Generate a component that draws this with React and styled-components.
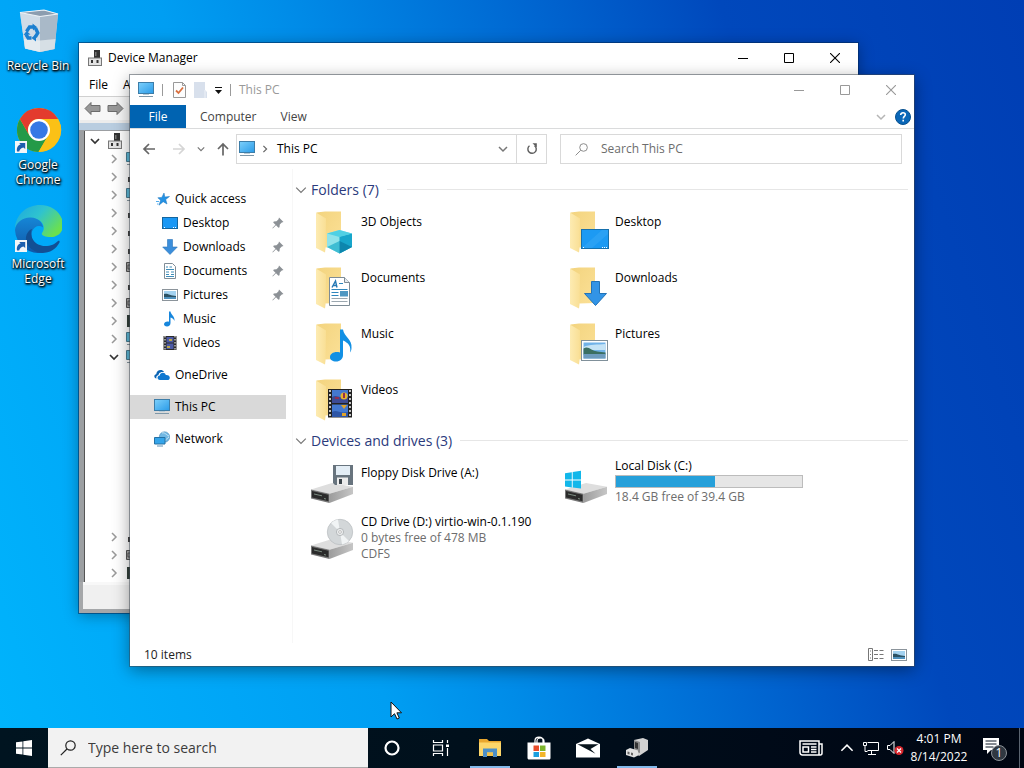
import React from "react";
import styled, { createGlobalStyle, css } from "styled-components";

const GlobalStyle = createGlobalStyle`
  * { box-sizing: border-box; }
  body {
    margin: 0;
    font-family: "Open Sans", "Noto Sans", sans-serif;
    font-size: 12px;
    line-height: 16px;
    color: #000;
  }
  button, input { font: inherit; color: inherit; }
  button { border: 0; padding: 0; background: none; }
  svg { display: block; flex: none; }
  ul { list-style: none; margin: 0; padding: 0; }
`;

/* ---------- desktop ---------- */

const Desktop = styled.main`
  min-height: 100vh;
  display: flex;
  flex-direction: column;
  background: linear-gradient(72deg, #00b4fc 0%, #00a6f7 20%, #009ef2 32%, #008ce8 42%, #0068d2 60%, #0048bc 76%, #003eb4 100%);
`;

const Workspace = styled.div`
  position: relative;
  flex: 1;
  min-height: 720px;
  padding: 7px 0 0;
`;

const Shortcuts = styled.nav`
  display: flex;
  flex-direction: column;
  gap: 18px;
  width: 76px;
`;

const Shortcut = styled.a`
  display: flex;
  flex-direction: column;
  align-items: center;
  gap: 3px;
  min-height: 81px;
  color: #fff;
  line-height: 15px;
  text-align: center;
  text-decoration: none;
  text-shadow: 0 1px 2px #000, 1px 1px 2px #000, 1px 1px 3px rgba(0, 0, 0, 0.8);
`;

const ShortcutLabel = styled.span`
  padding: 0 4px;
`;

const Pointer = styled.svg`
  position: absolute;
  left: 390px;
  bottom: 8px;
`;

/* ---------- window parts ---------- */

const Window = styled.section`
  position: absolute;
  display: flex;
  flex-direction: column;
  background: #fff;
`;

const DeviceWindow = styled(Window)`
  inset: 43px 166px 115px 79px;
  background: #a5a7a9;
  box-shadow: 0 0 0 1px rgba(0, 40, 90, 0.55), 0 2px 14px rgba(0, 0, 0, 0.35);
`;

const ExplorerWindow = styled(Window)`
  inset: 75px 110px 62px 130px;
  box-shadow: 0 0 0 1px rgba(60, 70, 80, 0.5), 0 4px 16px rgba(0, 0, 0, 0.4);
`;

const TitleBar = styled.header`
  display: flex;
  align-items: center;
  height: 30px;
  background: #fff;
  color: ${(p) => (p.$dim ? "#999" : "#000")};
`;

const DeviceTitle = styled.h1`
  flex: 1;
  margin: 0 0 0 6px;
  font-size: 12px;
  font-weight: 400;
`;

const ExplorerTitle = styled(DeviceTitle)`
  margin-left: 8px;
`;

const WindowButtons = styled.div`
  display: flex;
`;

const WindowButton = styled.button`
  display: grid;
  place-items: center;
  width: 46px;
  height: 28px;
`;

const Divider = styled.span`
  width: 1px;
  height: 12px;
  background: #9a9a9a;
`;

/* ---------- device manager ---------- */

const MenuBar = styled.nav`
  display: flex;
  gap: 15px;
  height: 23px;
  padding: 3px 10px;
  background: #fff;
`;

const DeviceToolbar = styled.div`
  display: flex;
  gap: 6px;
  height: 27px;
  padding: 4px 5px;
  background: #f7f7f7;
  border-top: 1px solid #d0d0d0;
  border-bottom: 3px solid #ececec;
`;

const TreeFrame = styled.div`
  flex: 1;
  display: flex;
  flex-direction: column;
  margin: 0 3px 0 0;
  padding: 8px 3px 0 5px;
  background: linear-gradient(#b9cde0, #b9cde0) top / 100% 7px no-repeat, #9c9fa2;
`;

const Tree = styled.ul`
  flex: 1;
  background: #fff;
  border-left: 1px solid #555;
  && { padding: 1px 0 0 5px; }
`;

const TreeRow = styled.li`
  display: flex;
  align-items: center;
  gap: ${(p) => (p.$level ? 7 : 8)}px;
  height: 18px;
  padding-left: ${(p) => p.$level * 19}px;
`;

const TreeChildren = styled.li`
  height: 162px;
`;

const DeviceStatus = styled.footer`
  height: 27px;
  margin: 0 4px 4px 4px;
  background: #f0f0f0;
  border-top: 3px solid #f8f8f8;
`;

/* ---------- explorer ---------- */

const QuickTools = styled.div`
  display: flex;
  align-items: center;
  gap: 8px;
  padding-left: 8px;
`;

const QuickActions = styled.div`
  display: flex;
  align-items: center;
  gap: 8px;
  padding-left: 2px;
`;

const Ribbon = styled.nav`
  display: flex;
  align-items: center;
  height: 24px;
  border-bottom: 1px solid #dadbdc;
`;

const RibbonTab = styled.button`
  height: 24px;
  padding: 0 10px 0 14px;
  color: #444;
  ${(p) =>
    p.$active &&
    css`
      width: 56px;
      height: 23px;
      padding: 0;
      color: #fff;
      background: #0063b1;
    `}
`;

const RibbonEnd = styled.div`
  display: flex;
  align-items: center;
  gap: 9px;
  margin-left: auto;
  padding-right: 3px;
`;

const AddressRow = styled.div`
  display: flex;
  align-items: center;
  height: 40px;
  padding: 0 12px;
`;

const HistoryButtons = styled.div`
  display: flex;
  align-items: center;
  gap: 11px;
  width: 94px;
`;

const BackButton = styled.button`
  padding-right: 5px;
`;

const AddressBox = styled.div`
  flex: 269;
  display: flex;
  align-items: center;
  gap: 6px;
  height: 30px;
  padding: 0 8px 0 2px;
  border: 1px solid #d9d9d9;
`;

const AddressText = styled.button`
  flex: 1;
  padding-left: 2px;
  text-align: left;
`;

const RefreshButton = styled.button`
  display: grid;
  place-items: center;
  width: 30px;
  height: 30px;
  border: 1px solid #d9d9d9;
  border-left: 0;
`;

const SearchBox = styled.label`
  flex: 312;
  display: flex;
  align-items: center;
  gap: 13px;
  height: 30px;
  margin-left: 13px;
  padding: 0 14px;
  border: 1px solid #d9d9d9;
`;

const SearchInput = styled.input`
  flex: 1;
  min-width: 0;
  padding: 0;
  border: 0;
  outline: 0;
  background: none;
  &::placeholder { color: #6d6d6d; opacity: 1; }
`;

const Body = styled.div`
  flex: 1;
  display: flex;
`;

const NavPane = styled.nav`
  flex: none;
  width: 163px;
  padding-top: 18px;
  border-right: 1px solid #f7f7f7;
`;

const NavGroup = styled.ul`
  && { margin-bottom: 8px; }
`;

const NavLink = styled.a`
  display: flex;
  align-items: center;
  gap: 5px;
  width: 156px;
  height: 24px;
  padding: 0 2px 0 ${(p) => (p.$nested ? 32 : 24)}px;
  color: #000;
  text-decoration: none;
  background: ${(p) => (p.$selected ? "#d9d9d9" : "none")};
`;

const NavLabel = styled.span`
  flex: 1;
`;

const Content = styled.div`
  flex: 1;
  padding: 10px 6px 0 2px;
`;

const GroupTitle = styled.h2`
  display: flex;
  align-items: center;
  gap: 4px;
  height: 21px;
  margin: 0 0 6px;
  font-size: 14px;
  font-weight: 400;
  line-height: 20px;
  color: #2b3a7c;
  &::after {
    content: "";
    flex: 1;
    height: 1px;
    margin-left: 4px;
    background: #e6e6e6;
  }
`;

const ItemGrid = styled.ul`
  display: grid;
  grid-template-columns: repeat(auto-fill, 254px);
  grid-auto-rows: 56px;
  && { padding-left: 12px; }
`;

const Item = styled.li`
  display: flex;
  gap: 6px;
  padding-top: 2px;
`;

const ItemText = styled.div`
  display: flex;
  flex-direction: column;
  margin-top: ${(p) => (p.$tall ? -1 : 6)}px;
  white-space: nowrap;
`;

const Detail = styled.span`
  color: #6d6d6d;
`;

const Meter = styled.div`
  width: 188px;
  height: 13px;
  margin: 1px 0;
  background: #e6e6e6;
  border: 1px solid #bcbcbc;
`;

const MeterFill = styled.div`
  height: 100%;
  background: #26a0da;
`;

const StatusBar = styled.footer`
  display: flex;
  align-items: center;
  justify-content: space-between;
  height: 23px;
  padding: 0 7px 0 14px;
  color: #222;
`;

const ViewButtons = styled.div`
  display: flex;
  gap: 6px;
`;

/* ---------- taskbar ---------- */

const Taskbar = styled.footer`
  display: flex;
  height: 40px;
  color: #fff;
  background: linear-gradient(90deg, #001420, #00101c 45%, #000a18 75%, #000612);
`;

const TaskButton = styled.button`
  display: grid;
  place-items: center;
  width: 48px;
  height: 40px;
  ${(p) =>
    p.$running &&
    css`
      background: linear-gradient(#83b9ea, #83b9ea) bottom / 40px 2px no-repeat;
    `}
`;

const TaskSearch = styled.label`
  display: flex;
  align-items: center;
  gap: 12px;
  width: 320px;
  padding-left: 12px;
  background: #f2f2f2;
  border-bottom: 1px solid #aaa;
  font-size: 14px;
  line-height: 20px;
  ${SearchInput}::placeholder { color: #3c3c3c; }
`;

const TaskApps = styled.div`
  display: flex;
  gap: 1px;
`;

const Tray = styled.div`
  display: flex;
  align-items: center;
  margin-left: auto;
`;

const TrayButton = styled.button`
  display: grid;
  place-items: center;
  width: ${(p) => p.$w || 24}px;
  height: 40px;
`;

const Clock = styled.time`
  width: 64px;
  line-height: 18px;
  text-align: center;
`;

const ShowDesktop = styled.button`
  width: 5px;
  height: 40px;
  border-left: 1px solid #5b6470;
`;

/* ---------- icons ---------- */

const ShortcutArrow = () => (
  <g>
    <rect x="1" y="35" width="12" height="12" fill="#f4f6f8" />
    <path d="M3 45.500c-.6-4 1-6.500 3.600-7L5.200 37h6v6l-1.700-1.600C7 42 5.500 43.500 5.200 45.500z" fill="#1e5fae" />
  </g>
);

const RecycleIcon = () => (
  <svg width="48" height="48" viewBox="0 0 48 48">
    <path d="M6 5.500 30 3l14 4-3.500 35L26 45 11 41.500z" fill="#c3d0dc" />
    <path d="M6 5.500 26 9.500 26 45 11 41.500z" fill="#d0dce7" />
    <path d="M26 9.500 44 7l-3.500 35L26 45z" fill="#a9b9c8" />
    <path d="M6 5.500 30 3l14 4-18 2.500z" fill="#8c9daf" stroke="#eef3f7" strokeWidth="1.200" />
    <path d="M10 32 26 33.500 41.500 32l-1 10L26 45l-15-3.500z" fill="#eef2f5" opacity=".65" />
    <g fill="none" stroke="#1b7fd0" strokeWidth="3.400">
      <path d="M12.500 24.500 15.500 20h4" />
      <path d="M21.500 21l2.300 5-2.500 4" />
      <path d="M17.500 31h-3.300L12 27.500" />
    </g>
    <path d="m18.500 16.500 4.500 3.500-4 3.500zM22 27l-4.500 4 4.500 3.500zM9.500 28l3-4 4 3.500z" fill="#1b7fd0" />
  </svg>
);

const ChromeIcon = () => (
  <svg width="48" height="48" viewBox="0 0 48 48">
    <circle cx="25" cy="24" r="22" fill="#fbc116" />
    <path d="M5.900 13A22 22 0 0 0 24.500 46L34 29.500 15.500 29.500z" fill="#249a48" />
    <path d="M44.100 13A22 22 0 0 1 24.500 46L34.500 29.500 34.500 13z" fill="#fbc116" />
    <path d="M5.900 13A22 22 0 0 1 44.100 13H25a11 11 0 0 0-9.600 16.500z" fill="#e33b2e" />
    <circle cx="25" cy="24" r="11" fill="#fff" />
    <circle cx="25" cy="24" r="8.800" fill="#3578e5" />
    <ShortcutArrow />
  </svg>
);

const EdgeIcon = () => (
  <svg width="48" height="48" viewBox="0 0 48 48">
    <defs>
      <linearGradient id="edgeTop" x1="0" y1="0" x2="1" y2=".6">
        <stop offset="0" stopColor="#1ca7e0" />
        <stop offset=".5" stopColor="#2fc3cf" />
        <stop offset="1" stopColor="#6be04f" />
      </linearGradient>
      <linearGradient id="edgeMid" x1="0" y1="0" x2="0" y2="1">
        <stop offset="0" stopColor="#1686d6" />
        <stop offset="1" stopColor="#0f57a8" />
      </linearGradient>
    </defs>
    <path d="M1 23C2 9 13 0 26 0c13 0 23 9 23 20 0 8-6 12-12 12-7 0-10-2-9-4 4-5 1-13-7-14C11 12 4 16 1 23z" fill="url(#edgeTop)" />
    <path d="M1 25C2 17 9 12 17 12.500c7 .5 12 5 12 10-4-3-9-1-11 4-2 8 4 17 12 21A24 24 0 0 1 1 25z" fill="url(#edgeMid)" />
    <path d="M18 24c-3 8 3 17 13 17 6 0 10-2 13-5 1-.6 2 0 1.500 1.500C42 44 36 48 28 48c-11-1-17-9-16-16 .5-4 3-7 6-8z" fill="#124f94" />
    <ShortcutArrow />
  </svg>
);

const DeviceIcon = () => (
  <svg width="14" height="16" viewBox="0 0 14 16">
    <path d="M6 0h6v9H6z" fill="#333" />
    <path d="M7 2h1.500v4H7z" fill="#777" />
    <rect x=".5" y="8" width="13" height="7.500" fill="#e3e3e3" stroke="#777" />
    <path d="M3 10h2v3H3zM8.500 10h2v3h-2z" fill="#333" />
  </svg>
);

const ToolArrow = ({ flip }) => (
  <svg width="17" height="15" viewBox="0 0 17 15">
    <path
      d="M1 7.500 7 1.500V4.500H16v6H7v3z"
      fill="#989898"
      stroke="#6c6c6c"
      transform={flip ? "matrix(-1 0 0 1 17 0)" : undefined}
    />
  </svg>
);

const Chevron = ({ dir = "down", color = "#777", size = 10, w = 1.5 }) => (
  <svg width={size} height={size} viewBox="0 0 10 10" fill="none" stroke={color} strokeWidth={w}>
    <path d={{ down: "M1 3l4 4 4-4", up: "M1 7l4-4 4 4", right: "M3 1l4 4-4 4" }[dir]} />
  </svg>
);

const DeviceGlyph = ({ kind }) => (
  <svg width="16" height="16" viewBox="0 0 16 16">
    {kind === "monitor" && (
      <g>
        <path d="M.5 1.500h14v9H.5z" fill="#5db9d8" stroke="#4a7c91" />
        <path d="M1 13.500h13" stroke="#8a9aa3" />
      </g>
    )}
    {kind === "dark" && <path d="M2 8h10v5H2zM5 6h6v2H5z" fill="#444" />}
    {kind === "disk" && <path d="M.5 3.500h13v9H.5zM2 6h8v4H2z" fill="#a9a9a9" stroke="#555" />}
    {kind === "chip" && <path d="M1 2h12v12H1z" fill="#33403a" />}
  </svg>
);

const Minimize = ({ color }) => (
  <svg width="10" height="10" stroke={color}><path d="M0 5.500h10" /></svg>
);
const Maximize = ({ color }) => (
  <svg width="10" height="10" fill="none" stroke={color}><path d="M.5.5h9v9h-9z" /></svg>
);
const Close = ({ color }) => (
  <svg width="10" height="10" stroke={color} strokeWidth="1.100"><path d="m0 0 10 10M10 0 0 10" /></svg>
);

const MonitorIcon = () => (
  <svg width="16" height="16" viewBox="0 0 16 16">
    <defs>
      <linearGradient id="screen" x1="0" y1="0" x2="1" y2="1">
        <stop offset="0" stopColor="#7dd0fb" />
        <stop offset="1" stopColor="#2a9be8" />
      </linearGradient>
    </defs>
    <rect x=".5" y=".5" width="15" height="11" fill="url(#screen)" stroke="#3d7da8" />
    <path d="M5 12.500h6" stroke="#b8cbd6" />
    <path d="M1 14.500h14" stroke="#7e97a8" />
  </svg>
);

const PropertiesIcon = () => (
  <svg width="13" height="16" viewBox="0 0 13 16">
    <path d="M.5.5h9l3 3v12H.5z" fill="#fdfdfd" stroke="#999" />
    <path d="M9.500.5v3h3" fill="none" stroke="#999" />
    <path d="m3 8.500 2.500 2.500L10 5.500" fill="none" stroke="#d9703f" strokeWidth="1.800" />
  </svg>
);

const NewFolderIcon = () => (
  <svg width="13" height="16" viewBox="0 0 13 16">
    <path d="M0 0h11v8l2 2v6H0z" fill="#d8e0ec" />
    <path d="M11 8v8" stroke="#eef2f8" />
  </svg>
);

const MenuMark = () => (
  <svg width="7" height="8" viewBox="0 0 7 8"><path d="M0 1h7v1H0zM0 4h7L3.500 8z" fill="#111" /></svg>
);

const HistoryArrow = ({ d, color }) => (
  <svg width="14" height="14" viewBox="0 0 14 14" fill="none" stroke={color} strokeWidth="1.700">
    <path d={d} />
  </svg>
);

const HelpIcon = () => (
  <svg width="16" height="16" viewBox="0 0 16 16">
    <circle cx="8" cy="8" r="7.500" fill="#0a67b8" stroke="#07508f" />
    <path d="M5.700 6c0-1.400 1-2.200 2.300-2.200s2.300.8 2.300 2c0 1.600-2 1.700-2 3.600" fill="none" stroke="#fff" strokeWidth="1.600" />
    <path d="M7.400 10.800H9v1.700H7.400z" fill="#fff" />
  </svg>
);

const RefreshIcon = () => (
  <svg width="12" height="12" viewBox="0 0 12 12">
    <path d="M8.500 2.700A4.200 4.200 0 1 1 3.500 2.800" fill="none" stroke="#5c5c5c" strokeWidth="1.400" />
    <path d="M6.500.3h4.300v4.300z" fill="#5c5c5c" />
  </svg>
);

const SearchIcon = ({ size = 13, color = "#8a8a8a" }) => (
  <svg width={size} height={size} viewBox="0 0 16 16" fill="none" stroke={color} strokeWidth="1.200">
    <circle cx="10.500" cy="5.500" r="4.700" />
    <path d="M7 9 .8 15.200" />
  </svg>
);

const PinIcon = () => (
  <svg width="12" height="12" viewBox="0 0 12 12">
    <path d="M7 .5 11.500 5 9.800 5.500 7.800 7.500l-.3 2.800-1 .5L4 8.200.8 11.500.4 11 3.500 7.700 1.200 5.500l.6-1 2.700-.3 2-2z" fill="#8c9196" />
  </svg>
);

const StarIcon = () => (
  <svg width="16" height="16" viewBox="0 0 16 16">
    <path d="m10 2 .8 4 4.700-.5-3.800 3 1.300 4.500-3.800-2.300L5 14.200l1.600-5L3.800 6.800l4-.4z" fill="#2492e4" stroke="#1b75bd" strokeWidth=".5" />
    <path d="M2 10.500h3M3 13h1.500" stroke="#52aef0" />
  </svg>
);

const DesktopSmall = () => (
  <svg width="16" height="16" viewBox="0 0 16 16">
    <rect x=".5" y="2.500" width="15" height="11" fill="#1a98f5" stroke="#14669f" />
    <path d="M2 12.500h1m8 0h1m1 0h1" stroke="#fff" />
  </svg>
);

const DownloadSmall = () => (
  <svg width="16" height="16" viewBox="0 0 16 16">
    <path d="M5.500.5h5V8h4.800L8 15.500.7 8h4.800z" fill="#3b8edb" stroke="#2874b8" strokeWidth=".6" />
  </svg>
);

const DocumentSmall = () => (
  <svg width="16" height="16" viewBox="0 0 16 16">
    <path d="M2.500.5h8l3 3v12h-11z" fill="#fff" stroke="#808d97" />
    <path d="M4 4h2m1.500 0H10M4 6.500h8M4 9h3m2 0h3M4 11.500h3m2 0h3M4 13.500h8" stroke="#3e8db9" />
  </svg>
);

const PictureSmall = () => (
  <svg width="16" height="16" viewBox="0 0 16 16">
    <rect x=".5" y="2.500" width="15" height="11" fill="#fff" stroke="#8b949b" />
    <path d="M2 4h12v8H2z" fill="#a3d2f0" />
    <path d="M2 7c4-1 6 2 12 2v1H2z" fill="#2c5264" />
    <path d="M2 10h12v2H2z" fill="#4f91bd" />
  </svg>
);

const MusicSmall = () => (
  <svg width="16" height="16" viewBox="0 0 16 16">
    <path d="M7 .5h1.500C9 4 13 5 12.500 10c-.8-2-2-3-4-3.500V12c0 2-1.500 3.500-3.500 3.500S2 14.500 2 13.300C2 11.500 4.500 10 7 10.800z" fill="#1786dc" />
  </svg>
);

const VideoSmall = () => (
  <svg width="16" height="16" viewBox="0 0 16 16">
    <path d="M1.500 1h13v14h-13z" fill="#2b2b2b" />
    <path d="M3 1v14M13 1v14" stroke="#fff" strokeDasharray="1.500 1.500" />
    <path d="M4.500 2h7v5.500h-7zM4.500 8.500h7V14h-7z" fill="#4c5aa5" />
    <path d="M7 4h3v2H7zM5 11h3v2H5z" fill="#bca847" />
  </svg>
);

const OneDriveIcon = () => (
  <svg width="16" height="16" viewBox="0 0 16 16">
    <path d="M2.500 11.500C-.5 11-.2 7.500 2.200 7.200 2.500 3 8 1.500 10 5 5 4.500 4.500 7.500 4.500 8c-2 .5-2.500 2-2 3.500z" fill="#0a64b4" />
    <path d="M6 13c-3.200-.2-3.200-4.300-.2-4.500C6 5 11.200 4.800 11.800 8c2.500-.3 4 1.200 4 2.700S14.700 13 13.500 13z" fill="#0f78d0" />
  </svg>
);

const NetworkIcon = () => (
  <svg width="16" height="16" viewBox="0 0 16 16">
    <circle cx="10.500" cy="6" r="5.200" fill="#71b8e4" stroke="#4b8db9" strokeWidth=".6" />
    <path d="M8 2c3-1 4 2 7 3M9 10c3 0 4-3 6-4" stroke="#c6e4f5" fill="none" />
    <path d="M.5 6.500h10.500v6.500H.5z" fill="#35a5ea" stroke="#2470a4" />
    <path d="M3 15h6" stroke="#5e92b4" />
  </svg>
);

const FolderArt = ({ children }) => (
  <svg width="48" height="48" viewBox="0 0 48 48">
    <defs>
      <linearGradient id="folderBack" x1="0" y1="0" x2="1" y2="1">
        <stop offset="0" stopColor="#f3d47f" />
        <stop offset="1" stopColor="#fbe096" />
      </linearGradient>
      <linearGradient id="folderFlap" x1="0" y1="0" x2="1" y2="0">
        <stop offset="0" stopColor="#fdebb2" />
        <stop offset="1" stopColor="#f9df95" />
      </linearGradient>
    </defs>
    <path d="M9.500 4.500 18 3.500h16V39l-16 .5z" fill="url(#folderBack)" />
    <path d="M9 4.500 19 10.500 18.500 40.500 18 44.500 9 40z" fill="url(#folderFlap)" />
    {children}
  </svg>
);

const overlays = {
  cube: (
    <g>
      <path d="M32.500 22 45 25.500V39L32.500 45.500 20 39V25.500z" fill="#8fe3ea" />
      <path d="M32.500 28.500 45 25.500V39L32.500 45.500z" fill="#17a6cb" />
      <path d="M32.500 22 45 25.500 32.500 29 20 25.500z" fill="#4fd0e4" />
      <path d="M20 39l12.500-6v12.500z" fill="#3fbdd3" />
      <path d="M32.500 33 45 39l-12.500 6.500z" fill="#0d86ad" />
    </g>
  ),
  desktop: (
    <g>
      <rect x="20.500" y="21.500" width="27" height="19" fill="#1c9af3" stroke="#1670ad" />
      <path d="M21 40 41 22h6v4L31 40z" fill="#4db4fa" opacity=".3" />
      <path d="M22 39.500h1m18 0h1m1 0h1m1 0h1" stroke="#fff" />
    </g>
  ),
  document: (
    <g>
      <path d="M22.500 13.500h15l5 5v23h-20z" fill="#fff" stroke="#7d8b95" />
      <path d="M37.500 13.500v5h5" fill="#e4eaee" stroke="#7d8b95" />
      <path d="M25 23.500 28.500 17 30 23.500M26.500 21.500h3" fill="none" stroke="#2478b5" strokeWidth="1.400" />
      <path d="M32 19.500h4M24.500 25.500h16M24.500 28.500h7M24.500 31.500h7" stroke="#2f86bd" />
      <path d="M24.500 34.500h16M24.500 37.500h16" stroke="#9ba7af" />
      <path d="M33 27h8v5.500h-8z" fill="#4e97c2" />
    </g>
  ),
  download: <path d="M30.500 17.500h8v12h7L34.500 41.500 23.500 29.500h7z" fill="#3294e6" stroke="#2273b7" />,
  music: (
    <path d="M33 9.500h3c1 7 9.500 10 8.500 18.500 0 2-.8 3.500-1.500 4.500 1.500-6-2-10-7-12V35c0 4-3 6.500-7 6.500-3.500 0-6-1.700-6-4.300 0-3.700 4.500-6.200 10-4.700z" fill="#1290e4" />
  ),
  picture: (
    <g>
      <rect x="20.500" y="20.500" width="26" height="20" fill="#fff" stroke="#80909a" />
      <path d="M22.500 22.500h22v16h-22z" fill="#70b2e8" />
      <path d="M22.500 27c6-3 14-2 22-3v6h-22z" fill="#c4e3f6" />
      <path d="M22.500 28.500c3-2 5-1 8 1s8 2 14 3v2h-22z" fill="#3b6f62" />
      <path d="M22.500 34h22v4.500h-22z" fill="#6d9bbd" />
    </g>
  ),
  video: (
    <g>
      <path d="M21 13h24v28.500H21z" fill="#222" />
      <path d="M23 14v27M43 14v27" stroke="#eee" strokeWidth="1.600" strokeDasharray="2 2" />
      <path d="M25 14h16v13H25zM25 28.500h16V41H25z" fill="#4378cf" />
      <path d="M25 21c5-3 7 2 16 0v6H25z" fill="#3c4b94" />
      <path d="M25 36c5-3 7 2 16 0v5H25z" fill="#2d55a6" />
      <circle cx="37" cy="20" r="3.500" fill="#e8b32b" />
      <path d="M34 29h6l-3 4zM35 37h4v3h-4z" fill="#e0a32a" />
      <path d="M36 17h2v5h-2zM28 21h4v2h-4z" fill="#922f52" />
    </g>
  ),
};

const DriveArt = ({ children }) => (
  <svg width="48" height="48" viewBox="0 0 48 48">
    <defs>
      <linearGradient id="driveSide" x1="0" y1="0" x2="1" y2="0">
        <stop offset="0" stopColor="#9c9c9c" />
        <stop offset="1" stopColor="#c6c6c6" />
      </linearGradient>
    </defs>
    <path d="M4 30.500 25 24l21 3.700-23.500 7z" fill="#dedede" />
    <path d="M22.500 34.700 46 27.700V35l-23.500 9z" fill="url(#driveSide)" />
    <path d="M4 30.500l18.500 4.200V44L4 39.500z" fill="#777" />
    <path d="M5 32l16.500 3.700v6.500L5 38.500z" fill="#2b2b2b" />
    <path d="M7 35l8 1.800M17 39.500l2 .5" stroke="#7b8b80" />
    {children}
  </svg>
);

const drives = {
  floppy: (
    <g>
      <path d="M26 6h20v20H28l-2-2z" fill="#68747e" />
      <path d="M29 7h14v9H29z" fill="#e3edf5" />
      <path d="M30 18.500h11V26H30z" fill="#ececec" />
      <path d="M32 20h3v5h-3z" fill="#3b444b" />
    </g>
  ),
  disk: (
    <g fill="#12b7ea">
      <path d="M4 14.300 10.800 13.200v7.300H4zM11.700 13 20 11.800v8.700h-8.300zM4 21.400h6.800v7L4 27.400zM11.700 21.400H20V29.600l-8.300-1.200z" />
    </g>
  ),
  cd: (
    <g>
      <circle cx="33" cy="17" r="12.700" fill="#d3d7d9" stroke="#b7bcbf" strokeWidth=".7" />
      <path d="M33 17 24 8a12.700 12.700 0 0 1 7-3.500zM33 17l9 9a12.700 12.700 0 0 1-7 3.500z" fill="#f1f4f5" />
      <circle cx="33" cy="17" r="3.600" fill="#eceeef" stroke="#a9adb0" strokeWidth=".8" />
      <circle cx="33" cy="17" r="1.400" fill="#fff" stroke="#999" strokeWidth=".6" />
    </g>
  ),
};

const WindowsLogo = () => (
  <svg width="16" height="16" viewBox="0 0 16 16" fill="#fff">
    <path d="M0 2.300 6.500 1.400v6.200H0zM7.300 1.300 16 0v7.600H7.300zM0 8.400h6.500v6.200L0 13.700zM7.300 8.400H16V16l-8.700-1.200z" />
  </svg>
);

const TaskViewIcon = () => (
  <svg width="18" height="16" viewBox="0 0 18 16" fill="none" stroke="#fff" strokeWidth="1.200">
    <path d="M1.500 0v2.500h9V0M1.500 5h9v6h-9zM1.500 16v-2.500h9V16M15.500 0v3M15.500 8v8" />
    <path d="M14 4.500h3v2.500h-3z" fill="#fff" stroke="none" />
  </svg>
);

const ExplorerIcon = () => (
  <svg width="22" height="20" viewBox="0 0 22 20">
    <path d="M0 1h8l2 2h12v15H0z" fill="#e9a72e" />
    <path d="M0 4.500h22V18H0z" fill="#fcd66a" />
    <path d="M4 10.500h14V19h-4v-4.500H8V19H4z" fill="#4b8fc8" />
    <path d="M8 14.500h6V18H8z" fill="#f2c24b" />
  </svg>
);

const StoreIcon = () => (
  <svg width="24" height="24" viewBox="0 0 24 24">
    <path d="M8 7V4.500C8 0 16 0 16 4.500V7M10 7V5c0-4 7-4 7 0v2" fill="none" stroke="#fff" strokeWidth="1.200" />
    <path d="M.5 6.500h23V22c0 .8-.5 1.500-1.500 1.500H2c-1 0-1.500-.7-1.500-1.500z" fill="#fff" />
    <path d="M6.500 9.500H12V15H6.500z" fill="#e84c2b" />
    <path d="M13 9.500h5.500V15H13z" fill="#7db42c" />
    <path d="M6.500 16H12v5H6.500z" fill="#1c9fdf" />
    <path d="M13 16h5.500v5H13z" fill="#f3b52a" />
  </svg>
);

const MailIcon = () => (
  <svg width="24" height="20" viewBox="0 0 24 20">
    <path d="M0 6 12 .5 24 6v13.500H0z" fill="#fff" />
    <path d="M1.500 6.200h21L14.500 11l5 4.800-8-4.300z" fill="#08141c" />
  </svg>
);

const DeviceTaskIcon = () => (
  <svg width="22" height="22" viewBox="0 0 22 22">
    <path d="M8 3 17 1l5 2v10l-9 6-5-4z" fill="#d2d2d2" />
    <path d="M8 3l6 2v11l-6-2z" fill="#8a8a8a" />
    <path d="M9 5l3 1v6L9 11z" fill="#333" />
    <path d="M0 13l4-2 8 2.500v5L8 20.500 0 18z" fill="#e2e2e2" />
    <path d="M1.500 14.500l2 .6v2.500l-2-.6zM5 15.500l2 .6v2.500l-2-.6z" fill="#666" />
  </svg>
);

const NewsIcon = () => (
  <svg width="24" height="16" viewBox="0 0 24 16" fill="none" stroke="#fff" strokeWidth="1.500">
    <path d="M1 1h19v14H3.500C1.800 15 1 14 1 12.500zM20 4h3v9c0 1.300-.7 2-1.700 2H19M3.500 4h14" />
    <path d="M4 7h5.500v5H4zM12 7h5.500M12 9.500h5.500M12 12h5.500" />
  </svg>
);

const EthernetIcon = () => (
  <svg width="16" height="14" viewBox="0 0 16 14" fill="none" stroke="#fff">
    <path d="M4.500 1.500h11v8h-11M8.500 10v3M5 13.500h8" />
    <path d="M.5 1.500h3v3h-3zM2 5v5.500h2.500" />
  </svg>
);

const VolumeIcon = () => (
  <svg width="17" height="16" viewBox="0 0 17 16">
    <path d="M.5 5.500H3L7 1.500v12L3 9.500H.5z" fill="none" stroke="#fff" />
    <circle cx="12" cy="10.500" r="4.500" fill="#d8262c" />
    <path d="m10 8.500 4 4m0-4-4 4" stroke="#fff" strokeWidth="1.200" />
  </svg>
);

const NotificationIcon = () => (
  <svg width="26" height="26" viewBox="0 0 26 26">
    <path d="M1 3h16v12H9l-4 4v-4H1z" fill="#fff" />
    <path d="M3.500 6h11M3.500 9h11M3.500 12h8" stroke="#0a1624" />
    <circle cx="17" cy="18" r="7.500" fill="#303841" stroke="#8c9298" />
    <text x="17" y="22" textAnchor="middle" fontSize="12" fill="#fff">1</text>
  </svg>
);

const DetailsViewIcon = () => (
  <svg width="17" height="14" viewBox="0 0 17 14" fill="none" stroke="#777">
    <path d="M.5.5h4v12h-4zM2 3h1M2 6.500h1M2 10h1" />
    <path d="M6 2.500h11M6 6.500h11M6 10.500h11" strokeDasharray="4 1.500" />
  </svg>
);

/* ---------- data ---------- */

const shortcuts = [
  ["Recycle Bin", RecycleIcon],
  ["Google Chrome", ChromeIcon],
  ["Microsoft Edge", EdgeIcon],
];

const devices = ["monitor", "dark", "monitor", "dark", "dark", "dark", "disk", "dark", "disk", "chip", "monitor"];
const moreDevices = ["dark", "disk", "chip"];

const quickAccess = [
  ["Desktop", DesktopSmall, true],
  ["Downloads", DownloadSmall, true],
  ["Documents", DocumentSmall, true],
  ["Pictures", PictureSmall, true],
  ["Music", MusicSmall, false],
  ["Videos", VideoSmall, false],
];

const places = [
  ["OneDrive", OneDriveIcon],
  ["This PC", MonitorIcon],
  ["Network", NetworkIcon],
];

const folders = [
  ["3D Objects", "cube"],
  ["Desktop", "desktop"],
  ["Documents", "document"],
  ["Downloads", "download"],
  ["Music", "music"],
  ["Pictures", "picture"],
  ["Videos", "video"],
];

const driveList = [
  { name: "Floppy Disk Drive (A:)", art: "floppy" },
  { name: "Local Disk (C:)", art: "disk", used: 53, details: ["18.4 GB free of 39.4 GB"] },
  { name: "CD Drive (D:) virtio-win-0.1.190", art: "cd", details: ["0 bytes free of 478 MB", "CDFS"] },
];

/* ---------- views ---------- */

const Controls = ({ color }) => (
  <WindowButtons>
    <WindowButton aria-label="Minimize"><Minimize color={color} /></WindowButton>
    <WindowButton aria-label="Maximize"><Maximize color={color} /></WindowButton>
    <WindowButton aria-label="Close"><Close color={color} /></WindowButton>
  </WindowButtons>
);

const DeviceTitleBar = styled(TitleBar)`
  padding-left: 9px;
`;

const DeviceManager = () => (
  <DeviceWindow aria-label="Device Manager">
    <DeviceTitleBar>
      <DeviceIcon />
      <DeviceTitle>Device Manager</DeviceTitle>
      <Controls color="#000" />
    </DeviceTitleBar>
    <MenuBar>
      <button>File</button>
      <button>Action</button>
    </MenuBar>
    <DeviceToolbar>
      <button aria-label="Back"><ToolArrow /></button>
      <button aria-label="Forward"><ToolArrow flip /></button>
    </DeviceToolbar>
    <TreeFrame>
      <Tree>
        <TreeRow $level={0}>
          <Chevron color="#333" w={1.7} />
          <DeviceIcon />
          <span>DESKTOP</span>
        </TreeRow>
        {devices.map((kind, i) => (
          <TreeRow key={i} $level={1}>
            <Chevron dir="right" color="#999" />
            <DeviceGlyph kind={kind} />
          </TreeRow>
        ))}
        <TreeRow $level={1}>
          <Chevron color="#333" w={1.7} />
          <DeviceGlyph kind="monitor" />
        </TreeRow>
        <TreeChildren />
        {moreDevices.map((kind, i) => (
          <TreeRow key={i} $level={1}>
            <Chevron dir="right" color="#999" />
            <DeviceGlyph kind={kind} />
          </TreeRow>
        ))}
      </Tree>
    </TreeFrame>
    <DeviceStatus />
  </DeviceWindow>
);

const Explorer = () => (
  <ExplorerWindow aria-label="This PC">
    <TitleBar $dim>
      <QuickTools>
        <MonitorIcon />
        <Divider />
        <QuickActions>
          <PropertiesIcon />
          <NewFolderIcon />
          <MenuMark />
        </QuickActions>
        <Divider />
      </QuickTools>
      <ExplorerTitle>This PC</ExplorerTitle>
      <Controls color="#999" />
    </TitleBar>
    <Ribbon>
      <RibbonTab $active>File</RibbonTab>
      <RibbonTab>Computer</RibbonTab>
      <RibbonTab>View</RibbonTab>
      <RibbonEnd>
        <Chevron color="#b5b5b5" />
        <button aria-label="Help"><HelpIcon /></button>
      </RibbonEnd>
    </Ribbon>
    <AddressRow>
      <HistoryButtons>
        <BackButton aria-label="Back"><HistoryArrow color="#666" d="M13 7H2M7 2 2 7l5 5" /></BackButton>
        <button aria-label="Forward"><HistoryArrow color="#d5d5d5" d="M1 7h11M7 2l5 5-5 5" /></button>
        <button aria-label="Recent locations"><Chevron size={8} /></button>
        <button aria-label="Up"><HistoryArrow color="#666" d="M7 13.500V2M2 7l5-5 5 5" /></button>
      </HistoryButtons>
      <AddressBox>
        <MonitorIcon />
        <Chevron dir="right" size={8} color="#666" />
        <AddressText>This PC</AddressText>
        <button aria-label="Previous locations"><Chevron /></button>
      </AddressBox>
      <RefreshButton aria-label="Refresh"><RefreshIcon /></RefreshButton>
      <SearchBox>
        <SearchIcon />
        <SearchInput type="text" placeholder="Search This PC" aria-label="Search This PC" />
      </SearchBox>
    </AddressRow>
    <Body>
      <NavPane>
        <NavGroup>
          <li>
            <NavLink href="#quick"><StarIcon /><NavLabel>Quick access</NavLabel></NavLink>
          </li>
          {quickAccess.map(([name, Icon, pinned]) => (
            <li key={name}>
              <NavLink href={`#${name}`} $nested>
                <Icon />
                <NavLabel>{name}</NavLabel>
                {pinned && <PinIcon />}
              </NavLink>
            </li>
          ))}
        </NavGroup>
        {places.map(([name, Icon]) => (
          <NavGroup key={name}>
            <li>
              <NavLink href={`#${name}`} $selected={name === "This PC"}>
                <Icon />
                <NavLabel>{name}</NavLabel>
              </NavLink>
            </li>
          </NavGroup>
        ))}
      </NavPane>
      <Content>
        <GroupTitle><Chevron size={12} w={1} />Folders (7)</GroupTitle>
        <ItemGrid>
          {folders.map(([name, art]) => (
            <Item key={name}>
              <FolderArt>{overlays[art]}</FolderArt>
              <ItemText>{name}</ItemText>
            </Item>
          ))}
        </ItemGrid>
        <GroupTitle><Chevron size={12} w={1} />Devices and drives (3)</GroupTitle>
        <ItemGrid>
          {driveList.map(({ name, art, used, details = [] }) => (
            <Item key={name}>
              <DriveArt>{drives[art]}</DriveArt>
              <ItemText $tall={details.length > 0}>
                <span>{name}</span>
                {used && (
                  <Meter role="meter" aria-label="Space used" aria-valuenow={used} aria-valuemin={0} aria-valuemax={100}>
                    <MeterFill style={{ width: `${used}%` }} />
                  </Meter>
                )}
                {details.map((line) => <Detail key={line}>{line}</Detail>)}
              </ItemText>
            </Item>
          ))}
        </ItemGrid>
      </Content>
    </Body>
    <StatusBar>
      <span>10 items</span>
      <ViewButtons>
        <button aria-label="Details view"><DetailsViewIcon /></button>
        <button aria-label="Large icons view"><PictureSmall /></button>
      </ViewButtons>
    </StatusBar>
  </ExplorerWindow>
);

export default function App() {
  return (
    <Desktop>
      <GlobalStyle />
      <Workspace>
        <Shortcuts>
          {shortcuts.map(([name, Icon]) => (
            <Shortcut key={name} href={`#${name}`}>
              <Icon />
              <ShortcutLabel>{name}</ShortcutLabel>
            </Shortcut>
          ))}
        </Shortcuts>
        <DeviceManager />
        <Explorer />
        <Pointer width="12" height="19" viewBox="0 0 12 19">
          <path d="M1 1v15l3.500-3.300L7 18l2.300-1-2.400-5.200h4.600z" fill="#fff" stroke="#111" />
        </Pointer>
      </Workspace>
      <Taskbar>
        <TaskButton aria-label="Start"><WindowsLogo /></TaskButton>
        <TaskSearch>
          <SearchIcon size={16} color="#222" />
          <SearchInput type="text" placeholder="Type here to search" aria-label="Type here to search" />
        </TaskSearch>
        <TaskApps>
          <TaskButton aria-label="Cortana">
            <svg width="16" height="16" viewBox="0 0 16 16">
              <circle cx="8" cy="8" r="6.500" fill="none" stroke="#fff" strokeWidth="2.200" />
            </svg>
          </TaskButton>
          <TaskButton aria-label="Task view"><TaskViewIcon /></TaskButton>
          <TaskButton aria-label="File Explorer" $running><ExplorerIcon /></TaskButton>
          <TaskButton aria-label="Store"><StoreIcon /></TaskButton>
          <TaskButton aria-label="Mail"><MailIcon /></TaskButton>
          <TaskButton aria-label="Device Manager" $running><DeviceTaskIcon /></TaskButton>
        </TaskApps>
        <Tray>
          <TrayButton aria-label="News" $w={48}><NewsIcon /></TrayButton>
          <TrayButton aria-label="Hidden icons"><Chevron dir="up" size={14} w={1.1} color="#fff" /></TrayButton>
          <TrayButton aria-label="Network"><EthernetIcon /></TrayButton>
          <TrayButton aria-label="Volume"><VolumeIcon /></TrayButton>
          <Clock>4:01 PM<br />8/14/2022</Clock>
          <TrayButton aria-label="Notifications" $w={48}><NotificationIcon /></TrayButton>
          <ShowDesktop aria-label="Show desktop" />
        </Tray>
      </Taskbar>
    </Desktop>
  );
}
